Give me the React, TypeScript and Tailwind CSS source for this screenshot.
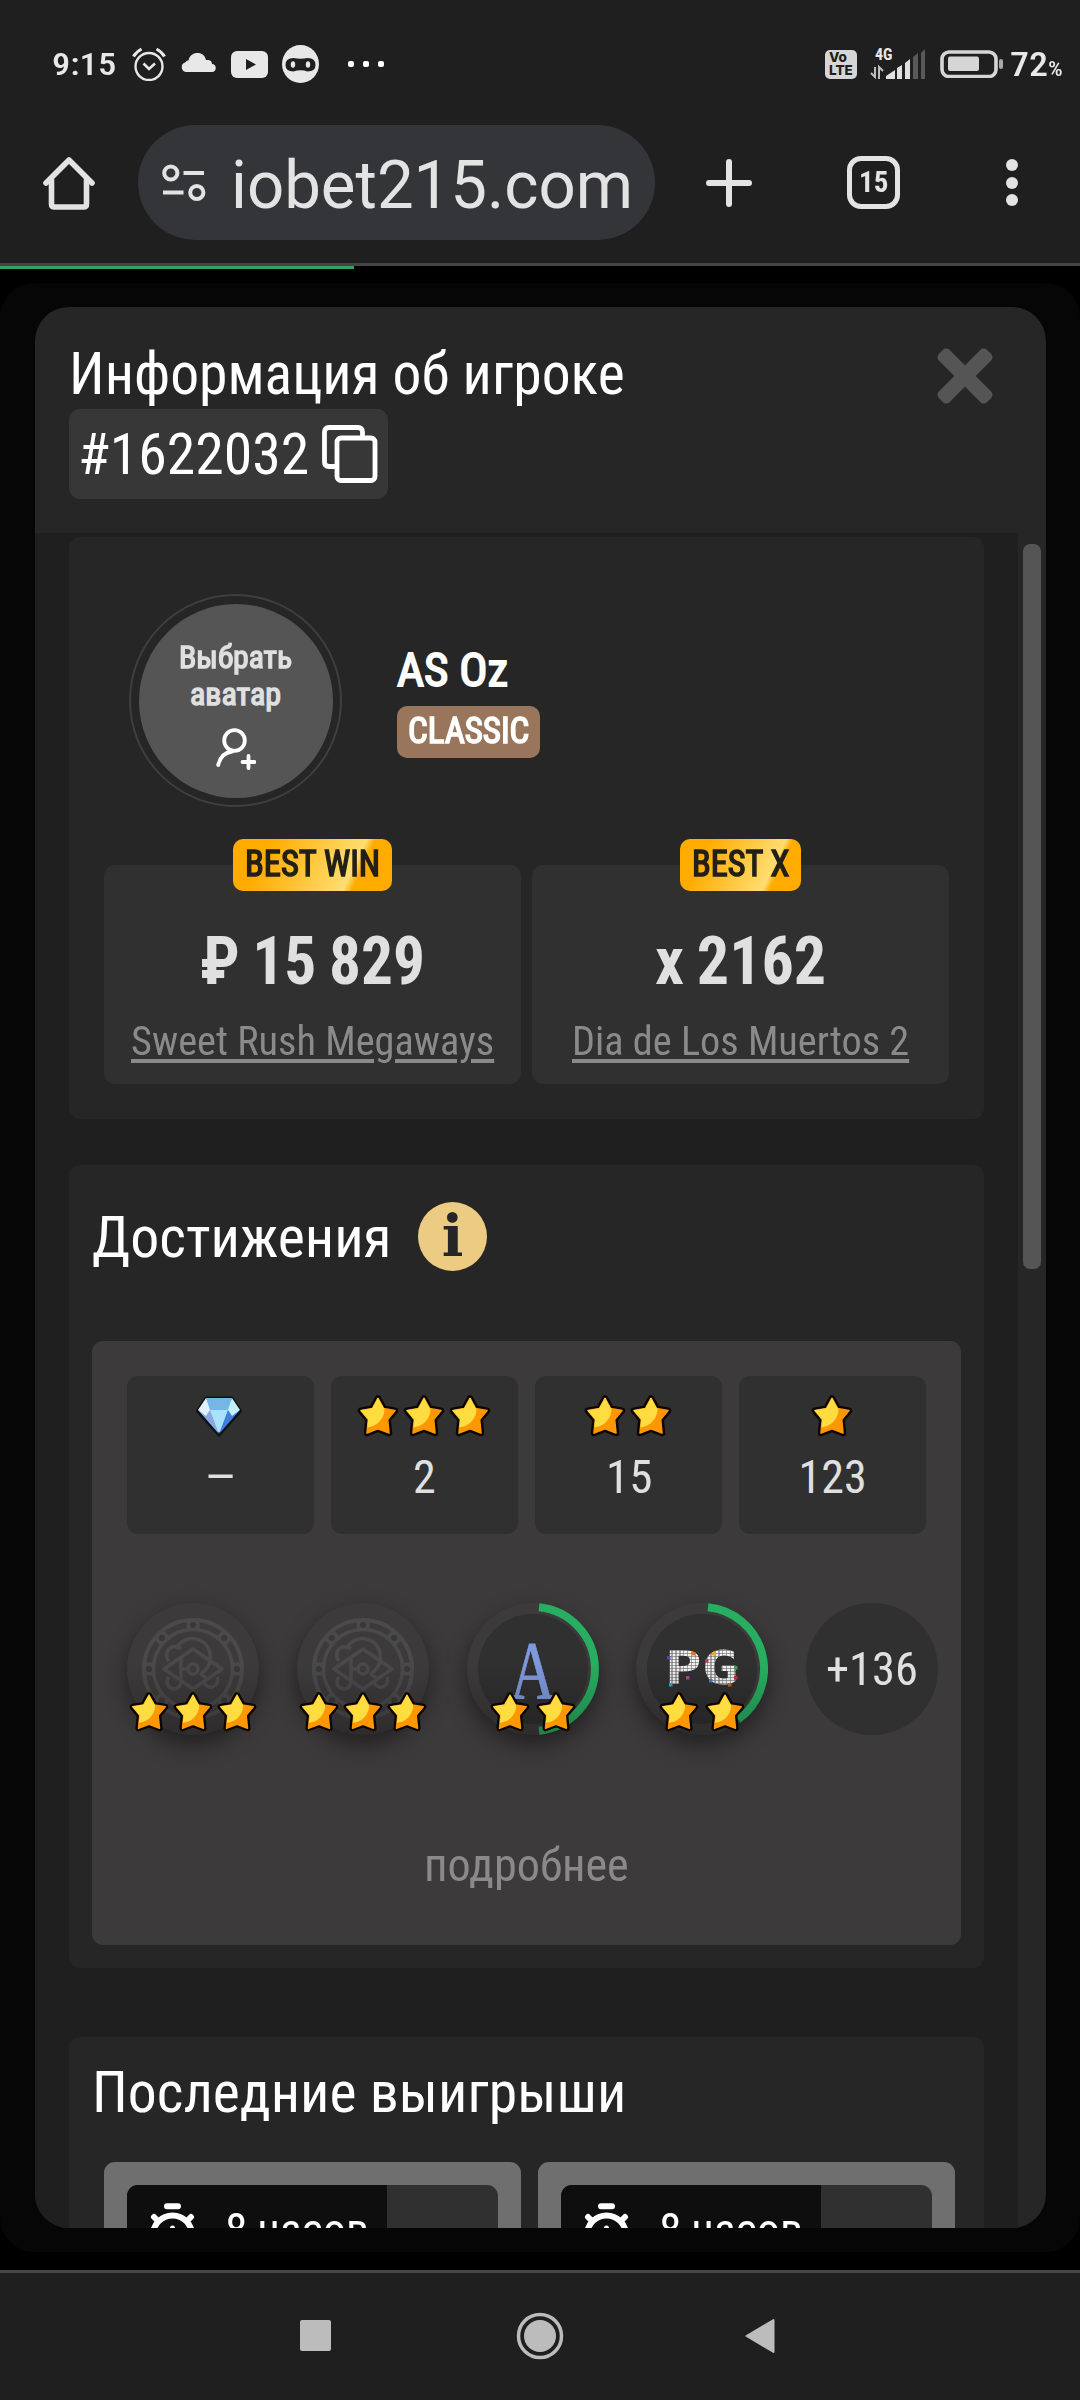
import { useLayoutEffect, useRef, useState } from 'react'
import type { ReactNode } from 'react'

// Condensed text: the line is squeezed horizontally to the width it is given
function FitText({ width, className = '', children }: { width: number; className?: string; children: ReactNode }) {
  const ref = useRef<HTMLSpanElement>(null)
  const [scale, setScale] = useState(1)

  useLayoutEffect(() => {
    if (ref.current) setScale(width / ref.current.offsetWidth)
  }, [width])

  return (
    <div className={`whitespace-nowrap ${className}`} style={{ width }}>
      <span ref={ref} className="inline-block origin-left" style={{ transform: `scaleX(${scale})` }}>
        {children}
      </span>
    </div>
  )
}

function Star({ className = '' }: { className?: string }) {
  return (
    <svg viewBox="0 0 42 42" className={`shrink-0 ${className}`}>
      <defs>
        <clipPath id="star-clip">
          <path d="M21 2.5 26.8 13.2 38.8 15.2 30.8 24.6 32.4 37.6 21 33.2 9.6 37.6 11.2 24.6 3.2 15.2 15.2 13.2Z" />
        </clipPath>
      </defs>
      <path
        d="M21 3.5 26.6 13.6 38 15.6 30.6 24.4 32 38 21 33.8 10 38 11.4 24.4 4 15.6 15.4 13.6Z"
        fill="#ff9800"
        stroke="#0b0602"
        strokeWidth="6.5"
        strokeLinejoin="round"
      />
      <path
        d="M21 3.5 26.6 13.6 38 15.6 30.6 24.4 32 38 21 33.8 10 38 11.4 24.4 4 15.6 15.4 13.6Z"
        fill="#ff9800"
        stroke="#ff9800"
        strokeWidth="1.6"
        strokeLinejoin="round"
      />
      <circle cx="9" cy="14" r="18.5" fill="#ffdc40" clipPath="url(#star-clip)" />
    </svg>
  )
}

function Diamond() {
  return (
    <svg viewBox="0 0 46 42" className="-ml-[2px] h-[42px] w-[46px]">
      <path d="M10 3h26l8.500 13L23 40 1.500 16Z" fill="#a8e2fb" stroke="#0d1216" strokeWidth="3" strokeLinejoin="round" />
      <path d="M10 3h26l-4 12H13Z" fill="#74b6e6" />
      <path d="M10 3 2 15l8 6 4-6Z" fill="#e1f0fd" />
      <path d="M36 3l8 12-8 6-4-6Z" fill="#c5f0f5" />
      <path d="M2 15l8 6 13 18Z M10 21l4-6 9 24Z" fill="#8ba8e2" />
      <path d="M44 15l-8 6-13 18Z M36 21l-4-6-9 24Z" fill="#3f7fe0" />
    </svg>
  )
}

// Casino chip drawn faintly behind the stars
function ChipLogo() {
  const angles = [0, 45, 90, 135, 180, 225, 270, 315]
  return (
    <svg viewBox="-51 -51 102 102" className="h-[102px] w-[102px]" fill="none" stroke="#4b4a4a">
      <circle r="49" strokeWidth="4" />
      <circle r="39.500" strokeWidth="3.500" />
      {angles.map((a) => (
        <g key={a} transform={`rotate(${a}) translate(0 -44)`}>
          <rect x="-6.500" y="-5" width="13" height="10" fill="#4b4a4a" stroke="none" />
          <circle r="3" fill="#393737" stroke="none" />
        </g>
      ))}
      <g strokeWidth="3.500" strokeLinejoin="round">
        <path d="M0-20 29 0 0 20-29 0Z" />
        <path d="M-17-20A18 18 0 0 1 17-9Q17-2 8 5l6 5" />
        <path d="M-12-20A7 7 0 1 0-24-8" />
        <path d="M-12-12v24M-12 0h6" />
        <path d="M-24 8a7 7 0 1 0 12 5M24 8a7 7 0 1 1-13 5" />
        <circle r="5" />
      </g>
    </svg>
  )
}

function Coin({ stars, arc, children }: { stars: number; arc?: string; children: ReactNode }) {
  return (
    <div className="relative flex h-[132px] w-[132px] items-center justify-center rounded-full bg-[#3d3a3b] shadow-[0_10px_22px_rgba(0,0,0,0.45)]">
      {arc ? (
        <>
          <div className="flex h-[110px] w-[110px] items-center justify-center rounded-full bg-[#303030]">{children}</div>
          <svg viewBox="-66 -66 132 132" className="absolute inset-0 h-[132px] w-[132px]">
            <path d={arc} fill="none" stroke="#27ae60" strokeWidth="8" />
          </svg>
        </>
      ) : (
        children
      )}
      <div className="absolute inset-0 rounded-full bg-linear-to-b from-transparent from-45% to-black/25" />
      <div className={`absolute inset-x-0 top-[89px] flex justify-center ${stars === 3 ? 'gap-[4px]' : 'gap-[6px]'}`}>
        {Array.from({ length: stars }, (_, i) => (
          <Star key={i} className="h-[40px] w-[40px]" />
        ))}
      </div>
    </div>
  )
}

// Coloured pixels scattered along the edges of the PG logo
const pixels = [
  { x: -10, y: -18, color: '#e0762c' },
  { x: -35, y: -14, color: '#5a4a9c' },
  { x: -33, y: 13, color: '#2aa5c9' },
  { x: -16, y: 6, color: '#a8479a' },
  { x: 10, y: -18, color: '#eaa92e' },
  { x: 3, y: -11, color: '#c62f68' },
  { x: 7, y: 9, color: '#3f7fc4' },
  { x: 32, y: -4, color: '#3fa060' },
  { x: 32, y: 6, color: '#c4302f' },
  { x: 26, y: 13, color: '#d6542c' },
]

function PgLogo() {
  return (
    <div className="relative">
      <FitText width={74} className="-mt-[2px] font-['DejaVu_Sans_Mono',monospace] text-[47px] leading-[56px] font-bold">
        <span className="bg-[repeating-linear-gradient(90deg,transparent_0_2px,#6668_2px_3px),repeating-linear-gradient(0deg,#f2f2f2_0_2px,#a0a0a0_2px_3px)] bg-clip-text text-transparent">
          PG
        </span>
      </FitText>
      <svg viewBox="-37 -28 74 56" className="absolute inset-0 h-[56px] w-[74px]">
        {pixels.map((p) => (
          <rect key={`${p.x},${p.y}`} x={p.x} y={p.y} width="3.500" height="3.500" fill={p.color} />
        ))}
      </svg>
    </div>
  )
}

function StatusBar() {
  return (
    <div className="flex h-[125px] items-center pt-[3px] pr-[17px] pl-[52px] text-[#e8e8e8]">
      <FitText width={64} className="text-[32px] leading-none font-medium">9:15</FitText>
      <svg viewBox="0 0 34 34" className="ml-4 h-[34px] w-[34px]" fill="none" stroke="currentColor" strokeWidth="2.400">
        <circle cx="17" cy="19.500" r="13.500" />
        <path d="M11.500 16.500 17 22l6-5.500" strokeWidth="2.600" />
        <path d="M1.500 9.500Q4 5 9.500 2M32.500 9.500Q30 5 24.500 2" strokeWidth="3" />
      </svg>
      <svg viewBox="0 0 35 19" className="mb-[3px] ml-[15px] h-[19px] w-[35px]" fill="currentColor">
        <path d="M5 19a5 5 0 0 1-.5-9.800Q5.500 7 7.500 7.500C9-2 23-3 25 7c5-.5 6 2 6 4 5 0 5 8 0 8Z" />
      </svg>
      <svg viewBox="0 0 37 27" className="ml-[15px] h-[27px] w-[37px]">
        <rect width="37" height="27" rx="6" fill="currentColor" />
        <path d="M15 8l10 5.500L15 19Z" fill="#1f1f1f" />
      </svg>
      <svg viewBox="0 0 37 38" className="ml-[14px] h-[38px] w-[37px]">
        <ellipse cx="18.500" cy="19" rx="18.500" ry="19" fill="currentColor" />
        <path d="M3.500 20q0-7 8-7 7 1.500 14 0 8 0 8 7 0 6.500-8 6.500-7-2.500-14 0-8 0-8-6.500Z" fill="#1f1f1f" />
        <ellipse cx="11" cy="19.500" rx="2.200" ry="3.200" fill="currentColor" />
        <ellipse cx="26" cy="19.500" rx="2.200" ry="3.200" fill="currentColor" />
      </svg>
      <div className="ml-[29px] flex gap-[9px]">
        <span className="h-[6px] w-[6px] rounded-[2px] bg-white" />
        <span className="h-[6px] w-[6px] rounded-[2px] bg-white" />
        <span className="h-[6px] w-[6px] rounded-[2px] bg-white" />
      </div>

      <div className="ml-auto flex h-[29px] w-[32px] flex-col justify-center rounded-[5px] bg-[#d6d6d6] pl-[4px] font-['Inter',sans-serif] text-[13.5px] leading-[13px] font-extrabold text-[#1f1f1f]">
        <span>Vo</span>
        <FitText width={24}>LTE</FitText>
      </div>
      <div className="ml-[13px] flex h-[32px] w-[56px] flex-col">
        <span className="pl-[5px] text-[16px] leading-[13px] font-bold">4G</span>
        <svg viewBox="0 0 56 30" className="-mt-[12px] h-[30px] w-[56px] shrink-0">
          <path d="M5 18v10l-4-4M9 30V18l4 4" fill="none" stroke="#bdbdbd" strokeWidth="2" />
          <path d="M16 30v-3l9-6v9ZM27 30V19l5-3v14ZM35 30V14l5-4v20Z" fill="#e0e0e0" />
          <path d="M43 30V8l5-4v26ZM51 30V4l4-4v30Z" fill="#595959" />
        </svg>
      </div>
      <svg viewBox="0 0 64 28" className="ml-[14px] h-[28px] w-[64px]">
        <rect x="2" y="2" width="54" height="24.500" rx="7" fill="none" stroke="#d6d6d6" strokeWidth="3.600" />
        <rect x="8" y="6.500" width="31" height="14.500" rx="2" fill="#d6d6d6" />
        <rect x="59" y="9" width="4" height="10" rx="2" fill="#a8a8a8" />
      </svg>
      <div className="ml-[6px] flex items-baseline">
        <FitText width={38} className="text-[34px] leading-none font-medium">72</FitText>
        <FitText width={15} className="text-[20px] leading-none font-medium">%</FitText>
      </div>
    </div>
  )
}

function BrowserBar() {
  return (
    <div className="flex h-[141px] items-start border-b-[3px] border-[#454545] text-[#e3e3e3]">
      <div className="flex h-[115px] w-[138px] items-center pl-[43px]">
        <svg viewBox="0 0 52 54" className="h-[54px] w-[52px]" fill="none" stroke="currentColor" strokeWidth="5.600" strokeLinejoin="round" strokeLinecap="round">
          <path d="M3 27 26 4l23 23" />
          <path d="M8.500 24v24q0 3 3 3h29q3 0 3-3V24" />
        </svg>
      </div>
      <div className="flex h-[115px] w-[517px] items-center rounded-full bg-[#343539] pl-[24px]">
        <svg viewBox="0 0 44 38" className="h-[38px] w-[44px]" fill="none" stroke="currentColor" strokeWidth="4">
          <circle cx="8.800" cy="9" r="6.600" />
          <circle cx="34.800" cy="28.500" r="6.600" />
          <path d="M21.500 9h20.500M1 28.500h20.500" />
        </svg>
        <FitText width={402} className="mt-[6px] ml-[25px] font-['Roboto',sans-serif] text-[66px] leading-[80px]">iobet215.com</FitText>
      </div>
      <div className="flex h-[115px] flex-1 items-center">
        <svg viewBox="0 0 46 48" className="ml-[51px] h-[48px] w-[46px]" stroke="currentColor" strokeWidth="6" strokeLinecap="round">
          <path d="M23 3v42M3 24h40" />
        </svg>
        <div className="ml-[95px] flex h-[53px] w-[53px] items-center justify-center rounded-[14px] border-[5.500px] border-[#e3e3e3]">
          <FitText width={29} className="mb-[2px] text-[30px] leading-none font-bold">15</FitText>
        </div>
        <div className="ml-[106px] flex flex-col gap-[5.500px]">
          <span className="h-3 w-3 rounded-full bg-[#e3e3e3]" />
          <span className="h-3 w-3 rounded-full bg-[#e3e3e3]" />
          <span className="h-3 w-3 rounded-full bg-[#e3e3e3]" />
        </div>
      </div>
    </div>
  )
}

function ModalHeader() {
  return (
    <div className="flex h-[226px] shrink-0 justify-between pt-[32px] pr-[53px] pl-[34px]">
      <div>
        <FitText width={556} className="text-[59px] leading-[70px] text-white">Информация об игроке</FitText>
        <div className="flex h-[90px] w-[319px] items-center rounded-[11px] bg-[#373737] pl-[9px]">
          <FitText width={231} className="text-[58px] leading-[92px] text-white">#1622032</FitText>
          <svg viewBox="0 0 56 58" className="ml-[13px] h-[58px] w-[56px]" fill="none" stroke="#fff" strokeWidth="4.800">
            <rect x="15" y="13" width="38" height="42.500" rx="4" />
            <path d="M40.500 12V7q0-4.500-4.500-4.500H7Q2.500 2.500 2.500 7v30q0 4.500 4.500 4.500h7" />
          </svg>
        </div>
      </div>
      <svg viewBox="0 0 56 56" className="mt-[9px] h-[56px] w-[56px]" fill="#555">
        <rect x="-7.500" y="-34" width="15" height="68" rx="4.500" transform="translate(28 28) rotate(45)" />
        <rect x="-7.500" y="-34" width="15" height="68" rx="4.500" transform="translate(28 28) rotate(-45)" />
      </svg>
    </div>
  )
}

const records = [
  { badge: 'BEST WIN', badgeWidth: 135, value: '₽ 15 829', valueWidth: 225, game: 'Sweet Rush Megaways', gameWidth: 363 },
  { badge: 'BEST X', badgeWidth: 97, value: 'x 2162', valueWidth: 171, game: 'Dia de Los Muertos 2', gameWidth: 337 },
]

function ProfileCard() {
  return (
    <section className="h-[582px] rounded-[11px] bg-[#262626] px-[35px] pt-[57px]">
      <div className="flex">
        <div className="ml-[25px] flex h-[213px] w-[213px] items-center justify-center rounded-full border-2 border-[#3f3f3f]">
          <div className="flex h-[194px] w-[194px] flex-col items-center rounded-full bg-[#555] pt-[35px] text-[#e0e0e0]">
            <FitText width={113} className="text-[32px] leading-[37px] [-webkit-text-stroke:1.4px]">Выбрать</FitText>
            <FitText width={91} className="text-[32px] leading-[37px] [-webkit-text-stroke:1.4px]">аватар</FitText>
            <svg viewBox="0 0 40 42" className="mt-[15px] h-[42px] w-[40px]" fill="none" stroke="#fff" strokeWidth="3.800" strokeLinecap="round">
              <circle cx="18.500" cy="12.500" r="10.300" />
              <path d="M16 23.500Q5 25 2.200 37M32.500 28v12M26.500 34h12" />
            </svg>
          </div>
        </div>
        <div className="ml-[55px] pt-[45px] text-white">
          <FitText width={111} className="text-[47px] leading-[61px] [-webkit-text-stroke:1.8px]">AS Oz</FitText>
          <div className="mt-[6px] h-[52px] w-[143px] rounded-[10px] bg-[#98755b] pl-[11px]">
            <FitText width={121} className="text-[36px] leading-[50px] [-webkit-text-stroke:1.6px]">CLASSIC</FitText>
          </div>
        </div>
      </div>
      <div className="mt-[58px] grid grid-cols-2 gap-[11px]">
        {records.map((r) => (
          <div key={r.badge} className="relative flex h-[219px] flex-col items-center rounded-[11px] bg-[#303030] pt-[56px]">
            <div className="absolute -top-[26px] h-[52px] rounded-[10px] bg-[linear-gradient(115deg,#ffab00_20%,#ffdd70_73%,#ffab00_78%)] px-[12px] text-[#222018]">
              <FitText width={r.badgeWidth} className="text-[36px] leading-[50px] [-webkit-text-stroke:1.5px]">{r.badge}</FitText>
            </div>
            <FitText width={r.valueWidth} className="text-[67px] leading-[80px] font-bold [word-spacing:-2px] text-[#e0e0e0]">{r.value}</FitText>
            <FitText width={r.gameWidth} className="mt-[12px] text-[41px] leading-[56px] text-[#8a8a8a]">
              <span className="underline decoration-[4px] underline-offset-[4px]">{r.game}</span>
            </FitText>
          </div>
        ))}
      </div>
    </section>
  )
}

const counters = [
  { stars: 0, value: '–', width: 33 },
  { stars: 3, value: '2', width: 23 },
  { stars: 2, value: '15', width: 46 },
  { stars: 1, value: '123', width: 68 },
]

function AchievementsCard() {
  return (
    <section className="mt-[46px] h-[803px] rounded-[11px] bg-[#262626] px-[23px] pt-[37px]">
      <div className="flex items-center">
        <FitText width={299} className="text-[58px] leading-[71px] text-white">Достижения</FitText>
        <div className="mb-[2px] ml-[27px] h-[69px] w-[69px] rounded-full bg-[#eccb82] text-center font-['DejaVu_Serif',serif] text-[57px] leading-[67px] font-bold text-[#262626]">
          i
        </div>
      </div>
      <div className="mt-[68px] h-[604px] rounded-[11px] bg-[#3d3a3b] px-[35px] pt-[35px]">
        <div className="grid grid-cols-4 gap-[17px]">
          {counters.map((c) => (
            <div key={c.value} className="flex h-[158px] flex-col items-center rounded-[11px] bg-[#303030] pt-[19px]">
              <div className="flex h-[42px] gap-[4px] pr-[2px]">
                {c.stars === 0 && <Diamond />}
                {Array.from({ length: c.stars }, (_, i) => (
                  <Star key={i} className="h-[42px] w-[42px]" />
                ))}
              </div>
              <FitText width={c.width} className="mt-[10px] text-[46px] leading-[61px] text-[#e0e0e0]">{c.value}</FitText>
            </div>
          ))}
        </div>
        <div className="mt-[69px] flex w-[811px] justify-between">
          <Coin stars={3}>
            <ChipLogo />
          </Coin>
          <Coin stars={3}>
            <ChipLogo />
          </Coin>
          <Coin stars={2} arc="M6-61.700A62 62 0 0 1 6 61.700">
            <FitText width={45} className="mt-[3px] font-['Liberation_Serif',serif] text-[82px] leading-[90px] text-[#7f99dc] [-webkit-text-stroke:0.8px]">A</FitText>
          </Coin>
          <Coin stars={2} arc="M6-61.700A62 62 0 0 1 36 50.500">
            <PgLogo />
          </Coin>
          <div className="flex h-[132px] w-[132px] items-center justify-center rounded-full bg-[#303030]">
            <FitText width={92} className="text-[46px] leading-[60px] text-[#e0e0e0]">+136</FitText>
          </div>
        </div>
        <div className="mt-[100px] flex justify-center">
          <FitText width={205} className="text-[46px] leading-[60px] text-[#8a8a8a]">подробнее</FitText>
        </div>
      </div>
    </section>
  )
}

function WinCard() {
  return (
    <div className="h-[300px] rounded-[11px] bg-[#6f6f6f] p-[23px]">
      <div className="h-[250px] overflow-hidden rounded-[11px] bg-[#303030]">
        <div className="flex h-[100px] w-[260px] items-center bg-[#0e0e0e] pb-[10px] pl-[23px]">
          <svg viewBox="0 0 46 56" className="mb-[-2px] h-[56px] w-[46px]" fill="none" stroke="#fff" strokeWidth="6" strokeLinecap="round">
            <circle cx="22.500" cy="32" r="19.500" />
            <path d="M17 3.300h11M4 14l4 4M41 14l-4 4" />
            <path d="M22.500 25v8" strokeWidth="5" />
          </svg>
          <FitText width={144} className="ml-[29px] text-[46px] leading-[60px] text-white">8 часов</FitText>
        </div>
      </div>
    </div>
  )
}

function LastWinsCard() {
  return (
    <section className="mt-[69px] h-[500px] rounded-[11px] bg-[#262626] pt-[20px]">
      <FitText width={535} className="ml-[23px] text-[58px] leading-[70px] text-white">Последние выигрыши</FitText>
      <div className="mt-[35px] mr-[29px] ml-[35px] grid grid-cols-2 gap-[17px]">
        <WinCard />
        <WinCard />
      </div>
    </section>
  )
}

function NavBar() {
  return (
    <div className="flex h-[130px] items-center border-t-[3px] border-[#454747] pb-[2px] pl-[300px]">
      <span className="h-[31px] w-[31px] rounded-[2px] bg-[#bcbcbc]" />
      <svg viewBox="0 0 48 48" className="ml-[185px] h-[48px] w-[48px]">
        <circle cx="24" cy="24" r="21.500" fill="none" stroke="#bcbcbc" strokeWidth="3.500" />
        <circle cx="24" cy="24" r="16" fill="#bcbcbc" />
      </svg>
      <svg viewBox="0 0 30 36" className="ml-[181px] h-[36px] w-[30px]">
        <path d="M1.500 18 28.500 2v32Z" fill="#bcbcbc" stroke="#bcbcbc" strokeWidth="2" strokeLinejoin="round" />
      </svg>
    </div>
  )
}

export default function App() {
  return (
    <div className="h-[2400px] w-[1080px] overflow-hidden bg-[#1f1f1f] font-['Roboto_Condensed','Roboto',sans-serif]">
      <StatusBar />
      <BrowserBar />
      <main className="h-[2004px] bg-black">
        {/* page loading progress */}
        <div className="h-[3px] w-[354px] bg-[#36a062]" />
        <div className="mt-[14px] h-[1969px] rounded-[34px] bg-[#060606] pt-[24px] pr-[34px] pl-[35px]">
          <div className="flex h-[1921px] flex-col overflow-hidden rounded-[34px] bg-[#262626]">
            <ModalHeader />
            <div className="flex h-[1695px]">
              <div className="h-full w-[983px] overflow-hidden bg-[#1f1f1f] px-[34px] pt-1">
                <ProfileCard />
                <AchievementsCard />
                <LastWinsCard />
              </div>
              <div className="w-[28px] pt-[11px] pl-[5px]">
                <div className="h-[725px] w-[18px] rounded-[7px] bg-[#555]" />
              </div>
            </div>
          </div>
        </div>
      </main>
      <NavBar />
    </div>
  )
}
